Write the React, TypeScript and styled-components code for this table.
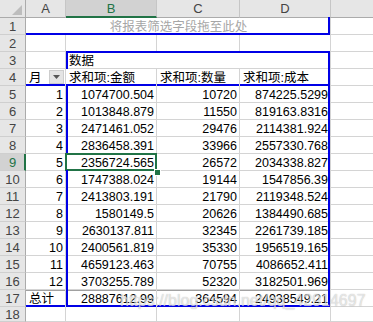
import React from 'react';
import styled, { createGlobalStyle, css } from 'styled-components';

const GRID = '#d4d4d4';
const BLUE = '#0000e6';
const GREEN = '#217346';

const Global = createGlobalStyle`
  html, body { margin: 0; padding: 0; background: #fff; }
  body { overflow: hidden; }
`;

const Sheet = styled.div`
  position: relative;
  width: 373px;
  height: 322px;
  overflow: hidden;
  display: grid;
  grid-template-columns: 26px 40px 91px 83px 91px 1fr;
  grid-template-rows: 18px repeat(17, 17px) 1fr;
  font-family: "Liberation Sans", "Noto Sans CJK SC", sans-serif;
  font-size: 12.5px;
  color: #000;
  background: #fff;
`;

const HeadBase = css`
  box-sizing: border-box;
  display: flex;
  align-items: center;
  justify-content: center;
  font-family: "Liberation Sans", sans-serif;
  font-size: 13px;
  overflow: hidden;
`;

const Corner = styled.div`
  ${HeadBase};
  background: #e6e6e6;
  border-right: 1px solid #ababab;
  border-bottom: 1px solid #ababab;
  justify-content: flex-end;
  align-items: flex-end;
  padding: 0 3px 2px 0;
`;

const ColHead = styled.div<{ $sel?: boolean; $open?: boolean }>`
  ${HeadBase};
  background: ${p => (p.$sel ? '#d2d2d2' : '#e6e6e6')};
  color: ${p => (p.$sel ? GREEN : '#444')};
  border-right: ${p => (p.$open ? 'none' : '1px solid #c6c6c6')};
  border-bottom: ${p => (p.$sel ? `2px solid ${GREEN}` : '1px solid #ababab')};
  padding-top: ${p => (p.$sel ? '1px' : '0')};
`;

const RowHead = styled.div<{ $sel?: boolean }>`
  ${HeadBase};
  background: ${p => (p.$sel ? '#d2d2d2' : '#e6e6e6')};
  color: ${p => (p.$sel ? GREEN : '#444')};
  border-right: ${p => (p.$sel ? `2px solid ${GREEN}` : '1px solid #ababab')};
  border-bottom: 1px solid #cfcfcf;
  padding-left: ${p => (p.$sel ? '1px' : '0')};
`;

type CellProps = {
  $t?: boolean;
  $r?: boolean;
  $b?: boolean;
  $l?: boolean;
  $align?: 'left' | 'right' | 'center';
  $span?: number;
  $muted?: boolean;
  $sel?: boolean;
  $total?: boolean;
  $open?: boolean;
};

const edge = (on?: boolean, color = BLUE) => (on ? `2px solid ${color}` : 'none');

const Cell = styled.div<CellProps>`
  position: relative;
  box-sizing: border-box;
  grid-column: span ${p => p.$span ?? 1};
  border-right: ${p => (p.$open ? 'none' : `1px solid ${GRID}`)};
  border-bottom: 1px solid ${GRID};
  padding: 2px 2px 0 3px;
  line-height: 14px;
  white-space: nowrap;
  overflow: visible;
  text-align: ${p => p.$align ?? 'left'};
  color: ${p => (p.$muted ? '#a6a6a6' : '#000')};
  ${p => p.$total && css`box-shadow: inset 0 1px 0 #a0a0a0;`}

  &::after {
    content: '';
    position: absolute;
    pointer-events: none;
    z-index: 1;
    ${p =>
      p.$sel
        ? css`
            inset: -1px -1px -1px -1px;
            border: 2px solid ${GREEN};
          `
        : css`
            inset: -1px 0 -1px 0;
            border-top: ${edge(p.$t)};
            border-right: ${edge(p.$r)};
            border-bottom: ${edge(p.$b)};
            border-left: ${edge(p.$l)};
          `}
  }
`;

const FilterCell = styled(Cell)`
  display: flex;
  justify-content: space-between;
  align-items: flex-start;
  padding-right: 1px;
`;

const DropButton = styled.span`
  box-sizing: border-box;
  width: 15px;
  height: 14px;
  margin-top: -1px;
  background: #e4e4e4;
  border: 1px solid #cdcdcd;
  display: flex;
  align-items: center;
  justify-content: center;
`;

const Handle = styled.span`
  position: absolute;
  right: -4px;
  bottom: -5px;
  width: 5px;
  height: 5px;
  background: ${GREEN};
  box-shadow: 0 0 0 1px #fff;
  z-index: 2;
`;

const Watermark = styled.div`
  position: absolute;
  left: 120px;
  top: 292px;
  font-family: "Liberation Sans", sans-serif;
  font-size: 16px;
  color: rgba(255, 255, 255, 0.62);
  text-shadow: 0 0 1px rgba(110, 110, 110, 0.55);
  white-space: nowrap;
  z-index: 5;
  pointer-events: none;
`;

const rows: [string, string, string, string][] = [
  ['1', '1074700.504', '10720', '874225.5299'],
  ['2', '1013848.879', '11550', '819163.8316'],
  ['3', '2471461.052', '29476', '2114381.924'],
  ['4', '2836458.391', '33966', '2557330.768'],
  ['5', '2356724.565', '26572', '2034338.827'],
  ['6', '1747388.024', '19144', '1547856.39'],
  ['7', '2413803.191', '21790', '2119348.524'],
  ['8', '1580149.5', '20626', '1384490.685'],
  ['9', '2630137.811', '32345', '2261739.185'],
  ['10', '2400561.819', '35330', '1956519.165'],
  ['11', '4659123.463', '70755', '4086652.411'],
  ['12', '3703255.789', '52320', '3182501.969'],
];

export default function App() {
  return (
    <>
      <Global />
      <Sheet>
        <Corner>
          <svg width="10" height="10" viewBox="0 0 10 10">
            <polygon points="10,0 10,10 0,10" fill="#bdbdbd" />
          </svg>
        </Corner>
        <ColHead>A</ColHead>
        <ColHead $sel>B</ColHead>
        <ColHead>C</ColHead>
        <ColHead>D</ColHead>
        <ColHead $open />

        <RowHead>1</RowHead>
        <Cell $span={4} $align="center" $muted $b $r>
          将报表筛选字段拖至此处
        </Cell>
        <Cell $open />

        <RowHead>2</RowHead>
        <Cell />
        <Cell />
        <Cell />
        <Cell />
        <Cell $open />

        <RowHead>3</RowHead>
        <Cell />
        <Cell $span={3} $t $l $r>
          数据
        </Cell>
        <Cell $open />

        <RowHead>4</RowHead>
        <FilterCell $b>
          <span>月</span>
          <DropButton>
            <svg width="7" height="4" viewBox="0 0 7 4">
              <polygon points="0,0 7,0 3.5,4" fill="#555" />
            </svg>
          </DropButton>
        </FilterCell>
        <Cell $b>求和项:金额</Cell>
        <Cell $b>求和项:数量</Cell>
        <Cell $b $r>
          求和项:成本
        </Cell>
        <Cell $open />

        {rows.map((r, i) => {
          const sel = i === 4;
          return (
            <React.Fragment key={r[0]}>
              <RowHead $sel={sel}>{i + 5}</RowHead>
              <Cell $align="right">{r[0]}</Cell>
              <Cell $align="right" $l={!sel} $sel={sel}>
                {r[1]}
                {sel && <Handle />}
              </Cell>
              <Cell $align="right">{r[2]}</Cell>
              <Cell $align="right" $r>
                {r[3]}
              </Cell>
              <Cell $open />
            </React.Fragment>
          );
        })}

        <RowHead>17</RowHead>
        <Cell $b $total>
          总计
        </Cell>
        <Cell $align="right" $l $b $total>
          28887612.99
        </Cell>
        <Cell $align="right" $b $total>
          364594
        </Cell>
        <Cell $align="right" $b $r $total>
          24938549.21
        </Cell>
        <Cell $open />

        <RowHead>18</RowHead>
        <Cell />
        <Cell />
        <Cell />
        <Cell />
        <Cell $open />

        <Watermark>https://blog.csdn.net/qq_42914697</Watermark>
      </Sheet>
    </>
  );
}
